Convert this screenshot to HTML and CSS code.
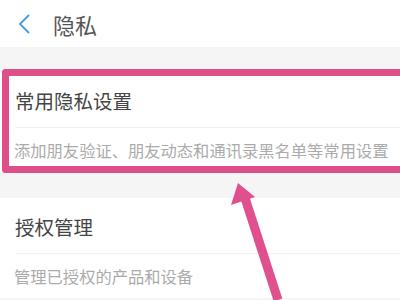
FILE: index.html
```html
<!DOCTYPE html>
<html lang="zh-CN">
<head>
    <meta charset="UTF-8">
    <meta name="viewport" content="width=device-width, initial-scale=1.0">
    <title>隐私</title>
    <link rel="stylesheet" href="styles.css">
</head>
<body>
    <div class="header">
        <svg class="back" width="14" height="22" viewBox="0 0 14 22">
            <polyline points="11,2 2,11 11,20" fill="none" stroke="#3f9fe0" stroke-width="1.8"/>
        </svg>
        <span class="title">隐私</span>
    </div>

    <div class="section">
        <div class="row-title">常用隐私设置</div>
        <div class="row-desc">添加朋友验证、朋友动态和通讯录黑名单等常用设置</div>
    </div>

    <div class="section">
        <div class="row-title">授权管理</div>
        <div class="row-desc">管理已授权的产品和设备</div>
    </div>

    <div class="mark-box"></div>
    <svg class="mark-arrow" width="400" height="300" viewBox="0 0 400 300">
        <line x1="278" y1="300" x2="245" y2="198" stroke="#e0508c" stroke-width="9"/>
        <polygon points="238,183 231,205 255,197" fill="#e0508c"/>
    </svg>
</body>
</html>
```

FILE: styles.css
```css
body {
    margin: 0;
    width: 400px;
    height: 300px;
    overflow: hidden;
    position: relative;
    background: #f5f5f5;
    font-family: "Noto Sans CJK SC", "Noto Sans", sans-serif;
}

.header {
    height: 47px;
    background: #fff;
    display: flex;
    align-items: center;
    padding-left: 18px;
}

.back {
    margin-right: 21px;
    margin-top: 1px;
}

.title {
    font-size: 22px;
    color: #555;
    margin-top: 1px;
}

.section {
    background: #fff;
    margin-top: 25px;
}

.section + .section {
    margin-top: 26px;
}

.row-title {
    height: 56px;
    display: flex;
    align-items: center;
    margin-left: 15px;
    font-size: 19.5px;
    color: #444;
    border-bottom: 1px solid #f0f0f0;
    padding-top: 2px;
    box-sizing: border-box;
}

.row-desc {
    height: 44px;
    display: flex;
    align-items: center;
    padding-left: 14px;
    font-size: 16.3px;
    color: #ababab;
}

.mark-box {
    position: absolute;
    left: 2px;
    top: 69px;
    width: 398px;
    height: 104px;
    border: 7px solid #de4f8a;
    border-right: none;
    border-radius: 4px 0 0 4px;
    box-sizing: border-box;
}

.mark-arrow {
    position: absolute;
    left: 0;
    top: 0;
}
```
